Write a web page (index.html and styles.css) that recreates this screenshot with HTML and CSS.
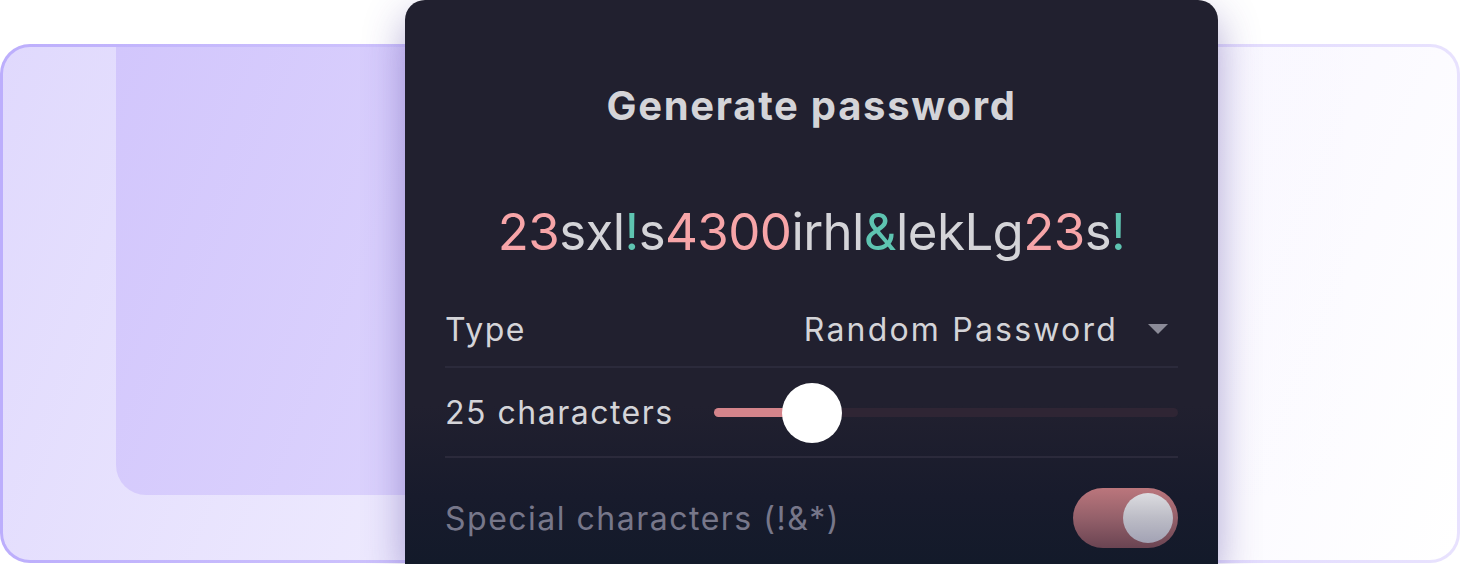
FILE: index.html
```html
<!DOCTYPE html>
<html lang="en">
<head>
<meta charset="utf-8">
<title>Generate password</title>
<link rel="stylesheet" href="styles.css">
</head>
<body>
<div class="stage">
  <div class="frame">
    <div class="inner"></div>
  </div>
  <section class="panel">
    <h1 class="title">Generate password</h1>
    <p class="pw"><span class="d">23</span>sxl<span class="s">!</span>s<span class="d">4300</span>irhl<span class="s">&amp;</span>lekLg<span class="d">23</span>s<span class="s">!</span></p>
    <div class="row row-type">
      <span class="label">Type</span>
      <span class="select">Random Password<span class="caret"></span></span>
    </div>
    <div class="sep"></div>
    <div class="row row-len">
      <span class="label">25 characters</span>
      <div class="track">
        <div class="fill" style="width:98px"></div>
        <div class="thumb" style="left:68px"></div>
      </div>
    </div>
    <div class="sep"></div>
    <div class="row row-special">
      <span class="label dim">Special characters (!&amp;*)</span>
      <div class="toggle"><div class="knob"></div></div>
    </div>
  </section>
</div>
</body>
</html>
```

FILE: styles.css
```css
html, body {
  margin: 0;
  padding: 0;
  background: #ffffff;
  height: 564px;
  overflow: hidden;
  font-family: "Inter", "Liberation Sans", sans-serif;
}

.stage {
  display: grid;
  width: 1460px;
  height: 564px;
  overflow: hidden;
}

.stage > * {
  grid-area: 1 / 1;
}

.frame {
  margin-top: 44px;
  height: 513px;
  border: 3px solid transparent;
  border-radius: 30px;
  background:
    linear-gradient(112deg, #e0d9fd 0%, #ede9fe 35%, #f8f6ff 70%, #ffffff 100%) padding-box,
    linear-gradient(to right, #bcaefc 0%, #d6ccfd 40%, #e8e2fe 100%) border-box;
}

.inner {
  margin: 0 113px;
  height: 448px;
  border-radius: 0 0 30px 30px;
  background: linear-gradient(112deg, #d2c6fc 0%, #dcd3fd 35%, rgba(248, 246, 255, 0.2) 75%, rgba(255, 255, 255, 0) 100%);
}

.panel {
  margin-left: 405px;
  width: 813px;
  height: 564px;
  box-sizing: border-box;
  padding: 82px 40px 0;
  border-radius: 20px 20px 0 0;
  background: linear-gradient(to bottom, #21202f 0%, #21202f 72%, #181b2c 88%, #131a2a 100%);
  box-shadow: 0 16px 40px rgba(70, 50, 150, 0.42);
  display: flex;
  flex-direction: column;
}

.panel > * {
  flex-shrink: 0;
}

.title {
  margin: 0;
  font-size: 40px;
  line-height: 48px;
  font-weight: 700;
  letter-spacing: 1.7px;
  color: #d4d4d8;
  text-align: center;
}

.pw {
  margin: 72px 0 0;
  font-size: 51px;
  line-height: 60px;
  font-weight: 400;
  color: #d4d4d8;
  text-align: center;
  letter-spacing: -0.6px;
}

.pw .d { color: #f7a5a8; }
.pw .s { color: #5ec4b1; }

.row {
  display: flex;
  align-items: center;
  justify-content: space-between;
  font-size: 32px;
  letter-spacing: 1.5px;
  color: #d4d4d8;
}

.row-type {
  margin-top: 30px;
  height: 74px;
}

.row-len {
  height: 88px;
}

.row-special {
  height: 120px;
}

.label.dim {
  color: #77778a;
}

.select {
  display: flex;
  align-items: center;
  gap: 30px;
  letter-spacing: 2.2px;
}

.caret {
  width: 0;
  height: 0;
  border-left: 10px solid transparent;
  border-right: 10px solid transparent;
  border-top: 10px solid #8b8b98;
  margin-right: 10px;
}

.sep {
  height: 2px;
  background: #2b2a3b;
}

.track {
  position: relative;
  width: 464px;
  height: 9px;
  border-radius: 5px;
  background: #2f2534;
}

.fill {
  height: 100%;
  border-radius: 5px;
  background: #d4848b;
}

.thumb {
  position: absolute;
  top: -25px;
  width: 60px;
  height: 60px;
  border-radius: 50%;
  background: #ffffff;
}

.toggle {
  width: 105px;
  height: 60px;
  border-radius: 30px;
  background: linear-gradient(to bottom, #bb767c 0%, #94606a 50%, #6a4452 100%);
  display: flex;
  align-items: center;
  justify-content: flex-end;
  padding-right: 5px;
  box-sizing: border-box;
}

.knob {
  width: 50px;
  height: 50px;
  border-radius: 50%;
  background: linear-gradient(to bottom, #dcdce0 0%, #bcbcc6 50%, #a2a2b4 100%);
}
```
